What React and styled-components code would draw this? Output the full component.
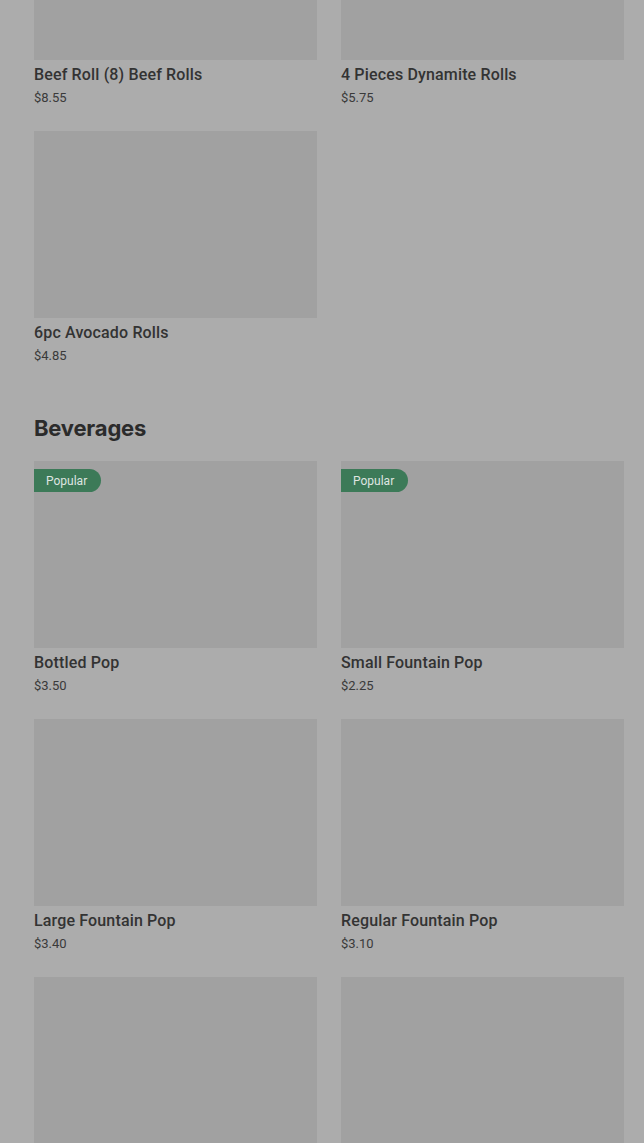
import React from 'react';
import styled, { createGlobalStyle } from 'styled-components';

const GlobalStyle = createGlobalStyle`
	html, body {
		margin: 0;
		padding: 0;
		background: #acacac;
		overflow: hidden;
	}
	body {
		font-family: Roboto, "Liberation Sans", sans-serif;
		color: #2e2e2e;
	}
`;

const Page = styled.div`
	height: 1143px;
	overflow: hidden;
	padding: 0 20px 0 34px;
`;

// the list is scrolled, so the first row is cut at the top
const Scroller = styled.div`
	margin-top: -127px;
`;

const Section = styled.section`
	margin-bottom: 47px;
`;

const Heading = styled.h2`
	margin: 0 0 17px;
	font-family: Inter, "Liberation Sans", sans-serif;
	font-size: 22px;
	line-height: 32px;
	font-weight: 700;
	letter-spacing: -0.2px;
	color: #2b2b2b;
`;

const Grid = styled.div`
	display: grid;
	grid-template-columns: 283px 283px;
	column-gap: 24px;
	row-gap: 24px;
`;

const Card = styled.div`
	display: flex;
	flex-direction: column;
`;

const Thumb = styled.div`
	position: relative;
	height: 187px;
	background: #a1a1a1;
`;

const Badge = styled.span`
	position: absolute;
	top: 8px;
	left: 0;
	height: 23px;
	padding: 0 14px 0 12px;
	display: flex;
	align-items: center;
	background: #3c7a58;
	color: #dfe5e1;
	font-size: 12px;
	border-radius: 0 12px 12px 0;
`;

const Title = styled.div`
	margin-top: 5px;
	font-size: 16px;
	line-height: 20px;
	font-weight: 500;
	letter-spacing: 0.15px;
	color: #333333;
`;

const Price = styled.div`
	margin-top: 4px;
	font-size: 13px;
	line-height: 18px;
	color: #3a3a3a;
`;

const rolls = [
	{ name: 'Beef Roll (8) Beef Rolls', price: '$8.55' },
	{ name: '4 Pieces Dynamite Rolls', price: '$5.75' },
	{ name: '6pc Avocado Rolls', price: '$4.85' },
];

const beverages = [
	{ name: 'Bottled Pop', price: '$3.50', popular: true },
	{ name: 'Small Fountain Pop', price: '$2.25', popular: true },
	{ name: 'Large Fountain Pop', price: '$3.40' },
	{ name: 'Regular Fountain Pop', price: '$3.10' },
	{ name: '', price: '' },
	{ name: '', price: '' },
];

const Item = ( { name, price, popular } ) => (
	<Card>
		<Thumb>{ popular ? <Badge>Popular</Badge> : null }</Thumb>
		{ name ? <Title>{ name }</Title> : null }
		{ price ? <Price>{ price }</Price> : null }
	</Card>
);

export default function App() {
	return (
		<Page>
			<GlobalStyle />
			<Scroller>
				<Section>
					<Grid>
						{ rolls.map( ( item ) => (
							<Item key={ item.name } { ...item } />
						) ) }
					</Grid>
				</Section>
				<Section>
					<Heading>Beverages</Heading>
					<Grid>
						{ beverages.map( ( item, i ) => (
							<Item key={ i } { ...item } />
						) ) }
					</Grid>
				</Section>
			</Scroller>
		</Page>
	);
}
